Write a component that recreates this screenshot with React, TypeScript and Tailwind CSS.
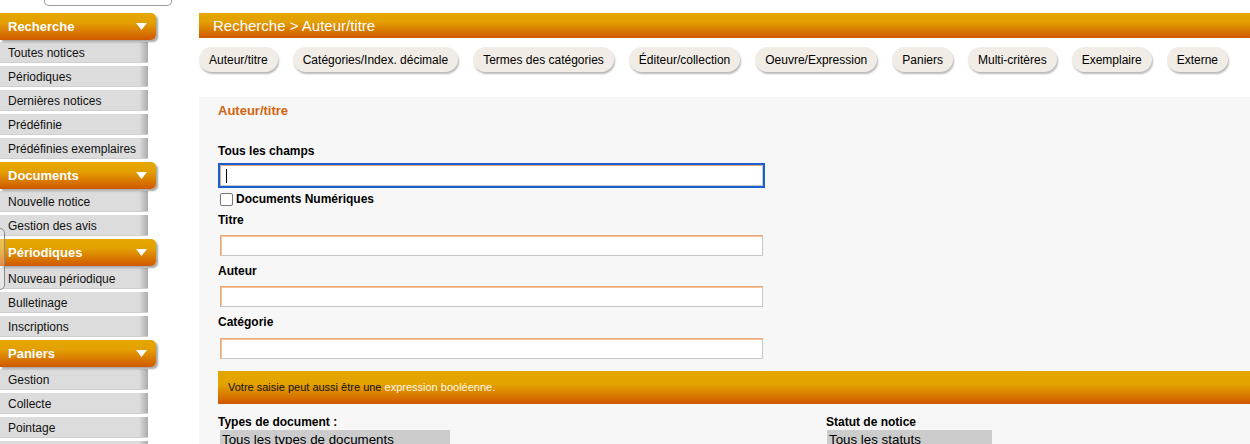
import React from "react";

const font = { fontFamily: '"Liberation Sans", Arial, sans-serif' };

function Triangle() {
  return (
    <svg width="11" height="7" viewBox="0 0 11 7" className="absolute right-[9px] top-[10px]">
      <polygon points="0,0 11,0 5.5,7" fill="#ffffff" />
    </svg>
  );
}

function SideHeader({ label, first }: { label: string; first?: boolean }) {
  return (
    <div
      className={`relative ${first ? "" : "mt-[3px]"} mb-[2px] h-[27px] w-[156px] rounded-r-[5px] bg-[linear-gradient(to_bottom,#e5a700_0%,#e3a000_35%,#d05800_100%)] shadow-[2px_2px_2px_rgba(0,0,0,0.35)] pl-[8px] text-[13px] font-bold leading-[27px] text-white`}
    >
      {label}
      <Triangle />
    </div>
  );
}

function SideItem({ label, last }: { label: string; last?: boolean }) {
  return (
    <div
      className={`h-[21px] w-[148px] bg-[linear-gradient(to_right,#dcdcdc_0%,#dcdcdc_94%,#ababab_100%)] shadow-[inset_0_-1px_0_#cfcfcf] pl-[8px] text-[12px] leading-[23px] text-[#111] ${last ? "" : "mb-[3px]"}`}
    >
      {label}
    </div>
  );
}

function Tab({ label }: { label: string }) {
  return (
    <div className="h-[25px] rounded-full bg-[#f1ece5] px-[10px] text-[12px] leading-[26px] text-black shadow-[1px_2px_2px_rgba(0,0,0,0.28)]">
      {label}
    </div>
  );
}

function Field({ mt }: { mt: string }) {
  return (
    <div className={`${mt} ml-[2px] h-[21px] w-[543px] border border-[#c6c6c6] border-t-[#e9a77a] border-l-[#e9a77a] bg-white shadow-[inset_1px_1px_0_#f6c09a]`} />
  );
}

function Label({ mt, children }: { mt: string; children: React.ReactNode }) {
  return <div className={`${mt} h-[16px] text-[12px] font-bold leading-[18px] text-black`}>{children}</div>;
}

export default function App() {
  const tabs = [
    "Auteur/titre",
    "Catégories/Index. décimale",
    "Termes des catégories",
    "Éditeur/collection",
    "Oeuvre/Expression",
    "Paniers",
    "Multi-critères",
    "Exemplaire",
    "Externe",
  ];
  return (
    <div style={font} className="relative flex h-[444px] w-[1250px] overflow-hidden bg-white">
      {/* Sidebar */}
      <div className="w-[199px] shrink-0">
        <div className="h-[13px]">
          <div className="ml-[44px] h-[6px] w-[128px] rounded-b-[5px] border-x border-b border-[#999]" />
        </div>
        <SideHeader label="Recherche" first />
        <SideItem label="Toutes notices" />
        <SideItem label="Périodiques" />
        <SideItem label="Dernières notices" />
        <SideItem label="Prédéfinie" />
        <SideItem label="Prédéfinies exemplaires" last />
        <SideHeader label="Documents" />
        <SideItem label="Nouvelle notice" />
        <SideItem label="Gestion des avis" last />
        <SideHeader label="Périodiques" />
        <SideItem label="Nouveau périodique" />
        <SideItem label="Bulletinage" />
        <SideItem label="Inscriptions" last />
        <SideHeader label="Paniers" />
        <SideItem label="Gestion" />
        <SideItem label="Collecte" />
        <SideItem label="Pointage" />
        <SideItem label="" />
      </div>

      {/* Left edge overlay */}
      <div className="absolute left-[-10px] top-[228px] h-[62px] w-[15px] rounded-[5px] border border-[#8a8a8a] bg-[rgba(255,255,255,0.3)]" />

      {/* Main */}
      <div className="flex-1">
        <div className="mt-[13px] h-[25px] bg-[linear-gradient(to_bottom,#e5a700_0%,#e3a000_35%,#d05800_100%)] pl-[14px] text-[15px] leading-[25px] text-white">
          Recherche &gt; Auteur/titre
        </div>
        <div className="mt-[9px] flex gap-[15px]">
          {tabs.map((t) => (
            <Tab key={t} label={t} />
          ))}
        </div>
        <div className="mt-[25px] h-[400px] bg-[#f7f7f7] pl-[19px]">
          <div className="pt-[5px] h-[22px] text-[13px] font-bold leading-[18px] text-[#d2640f]">Auteur/titre</div>
          <Label mt="mt-[23px]">Tous les champs</Label>
          <div className="relative mt-[7px] ml-[2px] h-[21px] w-[543px] border border-[#c6c6c6] border-t-[#e9a77a] border-l-[#e9a77a] bg-white outline-2 outline-[#1a5fd0]">
            <div className="absolute left-[5px] top-[3px] h-[14px] w-px bg-black" />
          </div>
          <div className="mt-[6px] flex h-[14px] items-center">
            <div className="ml-[2px] h-[13px] w-[13px] rounded-[2px] border border-[#767676] bg-white" />
            <span className="ml-[3px] text-[12px] font-bold leading-[16px] text-black">Documents Numériques</span>
          </div>
          <Label mt="mt-[5px]">Titre</Label>
          <Field mt="mt-[8px]" />
          <Label mt="mt-[6px]">Auteur</Label>
          <Field mt="mt-[8px]" />
          <Label mt="mt-[6px]">Catégorie</Label>
          <Field mt="mt-[9px]" />
          <div className="mt-[12px] h-[33px] bg-[linear-gradient(to_bottom,#e3a500_0%,#e3a300_40%,#cf5800_100%)] pl-[10px] text-[11px] leading-[33px] text-[#111]">
            Votre saisie peut aussi être une <span className="text-[#fffbea]">expression booléenne.</span>
          </div>
          <div className="mt-[9px] flex">
            <div className="w-[608px]">
              <Label mt="mt-0">Types de document :</Label>
              <div className="mt-[1px] ml-[2px] h-[20px] w-[230px] bg-[#cccccc] pl-[2px] text-[13.33px] leading-[19px] text-black">
                Tous les types de documents
              </div>
            </div>
            <div>
              <Label mt="mt-0">Statut de notice</Label>
              <div className="mt-[1px] ml-[1px] h-[20px] w-[165px] bg-[#cccccc] pl-[2px] text-[13.33px] leading-[19px] text-black">
                Tous les statuts
              </div>
            </div>
          </div>
        </div>
      </div>
    </div>
  );
}
